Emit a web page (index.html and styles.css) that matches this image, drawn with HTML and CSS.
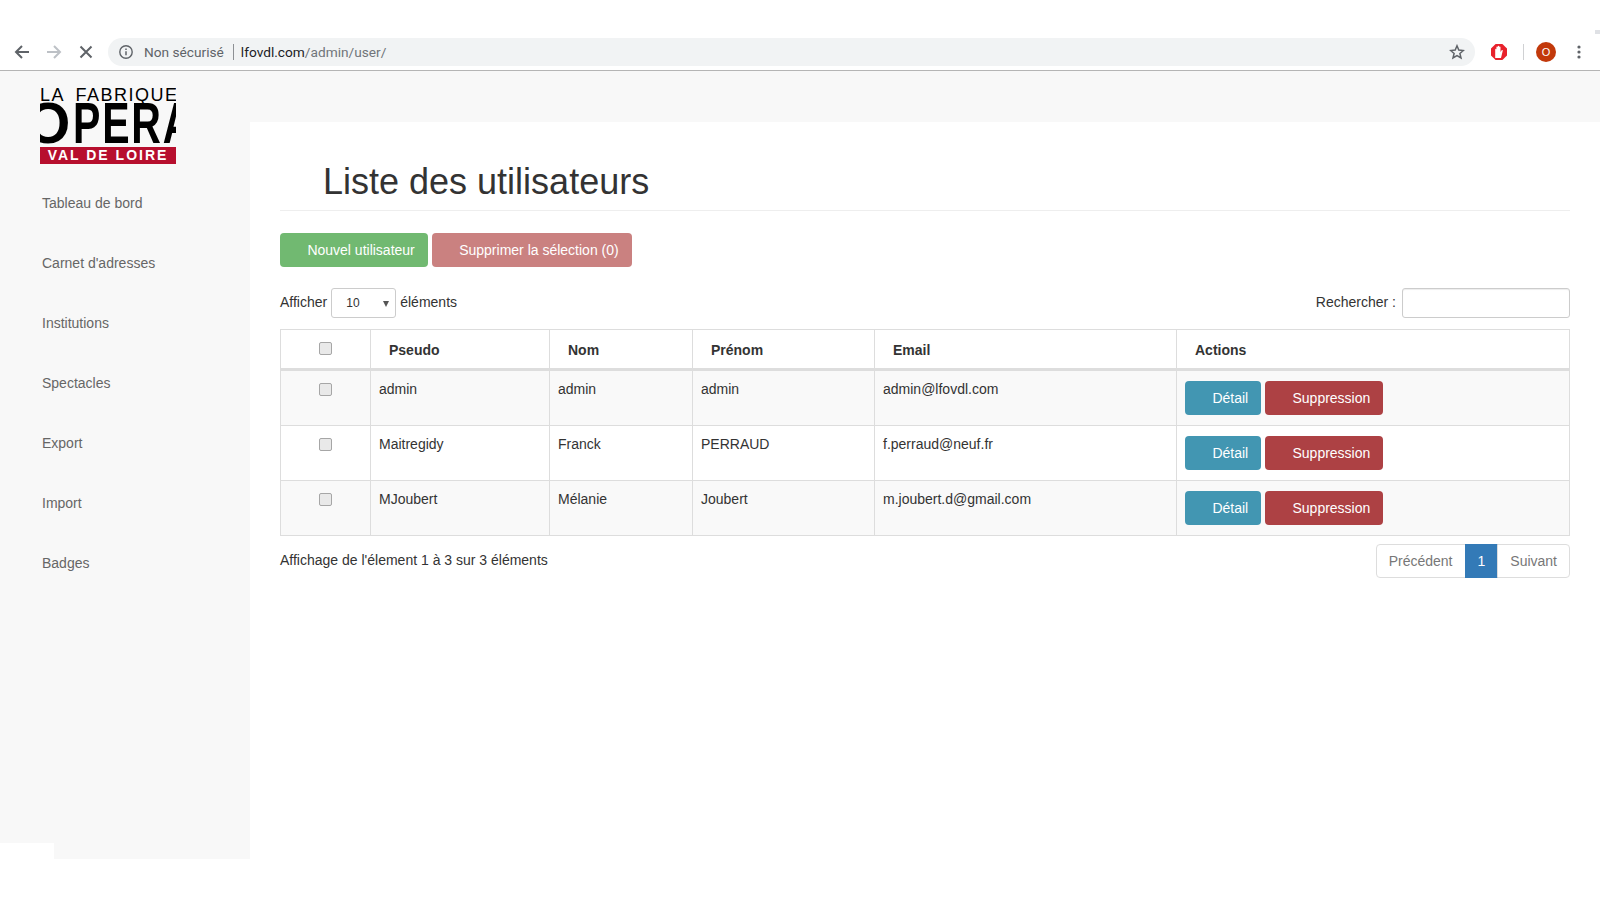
FILE: index.html
```html
<!DOCTYPE html>
<html lang="fr">
<head>
    <meta charset="UTF-8">
    <meta name="viewport" content="width=device-width, initial-scale=1.0">
    <title>Liste des utilisateurs</title>
    <link rel="stylesheet" href="styles.css">
</head>
<body>
    <div class="tab-mark"></div>
    <header class="browser-bar">
        <svg class="nav-icon" width="16" height="16" viewBox="0 0 16 16"><path d="M15 8H2.5M8 2L2 8l6 6" fill="none" stroke="#5f6368" stroke-width="2"/></svg>
        <svg class="nav-icon" width="16" height="16" viewBox="0 0 16 16"><path d="M1 8h12.5M8 2l6 6-6 6" fill="none" stroke="#bdc1c6" stroke-width="2"/></svg>
        <svg class="nav-icon" width="16" height="16" viewBox="0 0 16 16"><path d="M2.5 2.5l11 11M13.5 2.5l-11 11" fill="none" stroke="#5f6368" stroke-width="2"/></svg>
        <div class="omnibox">
            <svg class="info-icon" width="16" height="16" viewBox="0 0 16 16"><circle cx="8" cy="8" r="6.2" fill="none" stroke="#5f6368" stroke-width="1.4"/><path d="M8 7.2v4M8 4.6v1.4" stroke="#5f6368" stroke-width="1.5"/></svg>
            <span class="not-secure">Non sécurisé</span>
            <span class="url"><b>lfovdl.com</b>/admin/user/</span>
            <svg class="star-icon" width="16" height="16" viewBox="0 0 16 16"><path d="M8 1.8l1.8 4.3 4.6.4-3.5 3 1.1 4.5L8 11.6 4 14l1.1-4.5-3.5-3 4.6-.4z" fill="none" stroke="#5f6368" stroke-width="1.5"/></svg>
        </div>
        <svg class="adblock" width="18" height="18" viewBox="0 0 18 18"><path d="M5.6 1h6.8L17 5.6v6.8L12.4 17H5.6L1 12.4V5.6z" fill="#e8222c"/><path d="M5.2 15V6.5c0-.9 1.2-.9 1.2 0V4.2c0-.9 1.4-.9 1.4 0V3.4c0-.9 1.4-.9 1.4 0v.8c0-.8 1.3-.8 1.3 0V9l1-1.6c.6-.7 1.6-.1 1.2.7L11 15z" fill="#fff"/></svg>
        <span class="toolbar-sep"></span>
        <span class="avatar">O</span>
        <svg class="menu-icon" width="4" height="16" viewBox="0 0 4 16"><circle cx="2" cy="3" r="1.6" fill="#5f6368"/><circle cx="2" cy="8" r="1.6" fill="#5f6368"/><circle cx="2" cy="13" r="1.6" fill="#5f6368"/></svg>
    </header>

    <div class="wrapper">
        <nav class="sidebar">
            <div class="logo">
                <div class="logo-top">LA FABRIQUE</div>
                <div class="logo-opera"><span class="logo-o">O</span><span class="logo-pera">PERA</span></div>
                <div class="logo-band">VAL DE LOIRE</div>
            </div>
            <ul class="side-menu">
                <li><a href="#">Tableau de bord</a></li>
                <li><a href="#">Carnet d'adresses</a></li>
                <li><a href="#">Institutions</a></li>
                <li><a href="#">Spectacles</a></li>
                <li><a href="#">Export</a></li>
                <li><a href="#">Import</a></li>
                <li><a href="#">Badges</a></li>
            </ul>
            <div class="sidebar-notch"></div>
        </nav>

        <main class="content">
            <h1 class="page-header">Liste des utilisateurs</h1>

            <div class="toolbar">
                <button class="btn btn-success"><span class="glyph"></span> Nouvel utilisateur</button>
                <button class="btn btn-danger-off"><span class="glyph"></span> Supprimer la sélection (0)</button>
            </div>

            <div class="table-controls">
                <label class="length-label"><span class="control-text">Afficher</span>
                    <span class="fake-select">10<i class="caret"></i></span>
                    <span class="control-text">éléments</span></label>
                <label class="search-label"><span class="control-text">Rechercher :</span>
                    <input type="search" class="search-input">
                </label>
            </div>

            <table class="user-table">
                <colgroup>
                    <col class="col-check">
                    <col class="col-pseudo">
                    <col class="col-nom">
                    <col class="col-prenom">
                    <col class="col-email">
                    <col class="col-actions">
                </colgroup>
                <thead>
                    <tr>
                        <th class="check-cell"><input type="checkbox"></th>
                        <th>Pseudo</th>
                        <th>Nom</th>
                        <th>Prénom</th>
                        <th>Email</th>
                        <th>Actions</th>
                    </tr>
                </thead>
                <tbody>
                    <tr>
                        <td class="check-cell"><input type="checkbox"></td>
                        <td>admin</td>
                        <td>admin</td>
                        <td>admin</td>
                        <td>admin@lfovdl.com</td>
                        <td class="action-cell">
                            <button class="btn btn-info"><span class="glyph"></span> Détail</button>
                            <button class="btn btn-danger"><span class="glyph"></span> Suppression</button>
                        </td>
                    </tr>
                    <tr>
                        <td class="check-cell"><input type="checkbox"></td>
                        <td>Maitregidy</td>
                        <td>Franck</td>
                        <td>PERRAUD</td>
                        <td>f.perraud@neuf.fr</td>
                        <td class="action-cell">
                            <button class="btn btn-info"><span class="glyph"></span> Détail</button>
                            <button class="btn btn-danger"><span class="glyph"></span> Suppression</button>
                        </td>
                    </tr>
                    <tr>
                        <td class="check-cell"><input type="checkbox"></td>
                        <td>MJoubert</td>
                        <td>Mélanie</td>
                        <td>Joubert</td>
                        <td>m.joubert.d@gmail.com</td>
                        <td class="action-cell">
                            <button class="btn btn-info"><span class="glyph"></span> Détail</button>
                            <button class="btn btn-danger"><span class="glyph"></span> Suppression</button>
                        </td>
                    </tr>
                </tbody>
            </table>

            <div class="table-footer">
                <div class="table-info">Affichage de l'élement 1 à 3 sur 3 éléments</div>
                <ul class="pagination">
                    <li><a href="#">Précédent</a></li>
                    <li class="active"><a href="#">1</a></li>
                    <li><a href="#">Suivant</a></li>
                </ul>
            </div>
        </main>
    </div>
</body>
</html>
```

FILE: styles.css
```css
* {
    box-sizing: border-box;
}
body {
    font-family: "Liberation Sans", Arial, sans-serif;
    font-size: 14px;
    line-height: 20px;
    margin: 0;
    background-color: #fff;
    color: #333;
    position: relative;
}

/* browser chrome */
.tab-mark {
    position: absolute;
    top: 30px;
    right: 0;
    width: 5px;
    height: 4px;
    background: #dfe1e5;
}
.browser-bar {
    height: 71px;
    padding: 38px 0 4px 14px;
    display: flex;
    align-items: center;
    border-bottom: 1px solid #b5b5b5;
}
.nav-icon {
    margin-right: 16px;
    flex: none;
}
.omnibox {
    width: 1367px;
    height: 28px;
    margin-left: -2px;
    padding: 0 10px;
    display: flex;
    align-items: center;
    background: #f1f3f4;
    border-radius: 14px;
    font-family: Roboto, "Liberation Sans", sans-serif;
    font-size: 13.7px;
}
.not-secure {
    margin-left: 10px;
    padding-right: 9px;
    color: #5f6368;
    border-right: 1px solid #8d9094;
    line-height: 16px;
}
.url {
    margin-left: 7px;
    color: #70757a;
}
.url b {
    font-weight: 400;
    color: #202124;
}
.star-icon {
    margin-left: auto;
}
.adblock {
    margin-left: 15px;
    flex: none;
}
.toolbar-sep {
    width: 1px;
    height: 16px;
    margin-left: 15px;
    background: #d0d1d3;
}
.avatar {
    width: 20px;
    height: 20px;
    margin-left: 12px;
    border-radius: 50%;
    background: #c2390b;
    color: #fff;
    font-size: 11px;
    text-align: center;
    line-height: 20px;
    flex: none;
}
.menu-icon {
    margin-left: 21px;
    flex: none;
}

/* page */
.wrapper {
    display: flex;
    height: 788px;
    background: #f8f8f8;
}
.sidebar {
    width: 250px;
    flex: none;
    position: relative;
}
.sidebar-notch {
    position: absolute;
    left: 0;
    bottom: 0;
    width: 54px;
    height: 16px;
    background: #fff;
}
.logo {
    width: 136px;
    height: 78px;
    margin: 15px 0 9px 40px;
    overflow: hidden;
    color: #000;
    white-space: nowrap;
}
.logo-top {
    height: 14px;
    padding-top: 2px;
    font-size: 18px;
    line-height: 14px;
    letter-spacing: 1.5px;
    word-spacing: 5px;
}
.logo-opera {
    height: 47px;
    margin-left: -14px;
    font-size: 57px;
    font-weight: 700;
    line-height: 47px;
}
.logo-o {
    display: inline-block;
    width: 47px;
}
.logo-pera {
    display: inline-block;
    letter-spacing: 2.5px;
    transform: scaleX(0.72);
    transform-origin: left;
}
.logo-band {
    height: 17px;
    background: #b70f2e;
    color: #fff;
    font-size: 14px;
    font-weight: 700;
    line-height: 17px;
    letter-spacing: 2px;
    text-align: center;
}
.side-menu {
    list-style: none;
    margin: 0;
    padding: 0;
}
.side-menu li {
    height: 60px;
    padding: 20px 0 0 42px;
}
.side-menu a {
    color: #666;
    text-decoration: none;
}
.content {
    flex: 1;
    margin-top: 51px;
    padding: 0 31px 0 30px;
    background: #fff;
}
.page-header {
    margin: 0 0 22px;
    padding: 40px 0 8px 43px;
    font-size: 36px;
    font-weight: 500;
    line-height: 40px;
    border-bottom: 1px solid #eee;
}
.toolbar {
    display: flex;
    gap: 4px;
    margin-bottom: 21px;
}
.btn {
    height: 34px;
    padding: 6px 12px;
    border: 1px solid transparent;
    border-radius: 4px;
    color: #fff;
    font: inherit;
}
.glyph {
    display: inline-block;
    width: 10.5px;
}
.btn-success {
    background: #71b971;
}
.btn-danger-off {
    background: #ca8180;
}
.btn-info {
    background: #4296b2;
}
.btn-danger {
    background: #ad4144;
}
.table-controls {
    display: flex;
    justify-content: space-between;
    align-items: center;
    height: 30px;
    margin-bottom: 11px;
}
.length-label {
    display: flex;
    align-items: center;
    gap: 4px;
}
.control-text {
    padding-bottom: 2px;
}
.fake-select {
    position: relative;
    width: 65px;
    height: 30px;
    padding-left: 14px;
    border: 1px solid #ccc;
    border-radius: 3px;
    font-size: 12px;
    line-height: 28px;
}
.caret {
    position: absolute;
    right: 6px;
    top: 12px;
    border-top: 6px solid #555;
    border-left: 3px solid transparent;
    border-right: 3px solid transparent;
}
.search-label {
    display: flex;
    align-items: center;
    gap: 6px;
}
.search-input {
    width: 168px;
    height: 30px;
    padding: 5px 10px;
    border: 1px solid #ccc;
    border-radius: 3px;
    box-shadow: inset 0 1px 1px rgba(0, 0, 0, 0.075);
}
.user-table {
    width: 1289px;
    table-layout: fixed;
    border-collapse: collapse;
    border: 1px solid #ddd;
}
.col-check { width: 90px; }
.col-pseudo { width: 179px; }
.col-nom { width: 143px; }
.col-prenom { width: 182px; }
.col-email { width: 302px; }
.col-actions { width: 393px; }
.user-table th,
.user-table td {
    border: 1px solid #ddd;
    vertical-align: top;
    text-align: left;
}
.user-table th {
    height: 40px;
    padding: 10px 18px 8px;
    border-bottom-width: 3px;
}
.user-table td {
    height: 55px;
    padding: 8px;
}
.user-table tbody tr:nth-child(odd) {
    background: #f9f9f9;
}
.user-table .check-cell {
    padding: 8px 1px 0 0;
    text-align: center;
}
.user-table td.action-cell {
    padding: 10px 8px;
    white-space: nowrap;
}
.check-cell input {
    appearance: none;
    width: 13px;
    height: 13px;
    margin: 4px 0 0;
    background: #e9e9e9;
    border: 1px solid #a6a6a6;
    border-radius: 2px;
}
.table-footer {
    display: flex;
    justify-content: space-between;
    margin-top: 8px;
}
.table-info {
    padding-top: 6px;
}
.pagination {
    display: flex;
    list-style: none;
    margin: 0;
    padding: 0;
}
.pagination a {
    display: block;
    height: 34px;
    padding: 6px 12px;
    margin-left: -1px;
    border: 1px solid #ddd;
    color: #777;
    text-decoration: none;
}
.pagination li:first-child a {
    border-radius: 4px 0 0 4px;
}
.pagination li:last-child a {
    border-radius: 0 4px 4px 0;
}
.pagination .active a {
    background: #337ab7;
    border-color: #337ab7;
    color: #fff;
}
```
